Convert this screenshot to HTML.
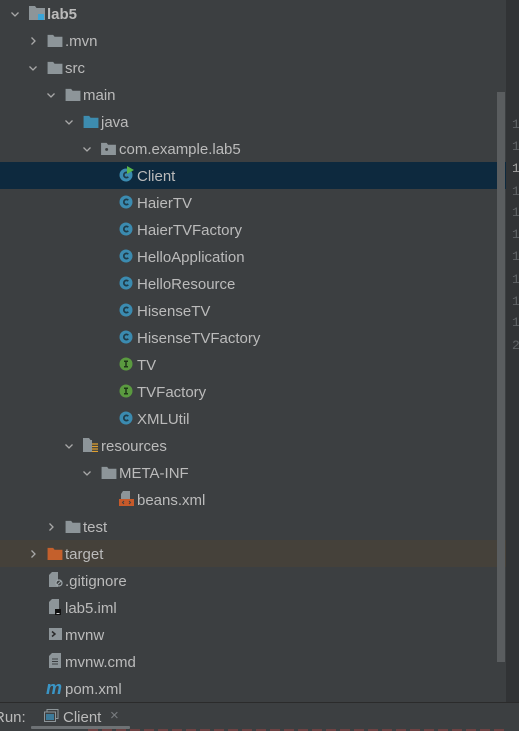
<!DOCTYPE html>
<html><head><meta charset="utf-8">
<style>
*{margin:0;padding:0;box-sizing:border-box}
html,body{width:519px;height:731px;overflow:hidden;background:#3c3f41;font-family:"Liberation Sans","DejaVu Sans",sans-serif}
.row{position:absolute;left:0;width:506px;height:27px}
.row .t{position:absolute;top:6px;font-size:15px;color:#bbbbbb;white-space:nowrap;line-height:17px}
.row svg{position:absolute}
.gut{position:absolute;left:506px;top:0;width:13px;height:703px;background:#313335}
.ln{position:absolute;left:512px;font-size:13px;color:#606366;font-family:"Liberation Mono",monospace}
</style></head><body>
<div class="gut"></div>
<div class="row" style="top:162px;background:#0d293e"></div>
<div class="row" style="top:540px;background:#45413a"></div>
<div style="position:absolute;left:497px;top:92px;width:8px;height:570px;background:#5a5d5f"></div>

<div class="ln" style="top:117px">1</div>
<div class="ln" style="top:139px">1</div>
<div class="ln" style="top:161px;color:#a4a3a3">1</div>
<div class="ln" style="top:184px">1</div>
<div class="ln" style="top:205px">1</div>
<div class="ln" style="top:227px">1</div>
<div class="ln" style="top:249px">1</div>
<div class="ln" style="top:272px">1</div>
<div class="ln" style="top:294px">1</div>
<div class="ln" style="top:315px">1</div>
<div class="ln" style="top:338px">2</div>

<svg width="0" height="0" style="position:absolute">
<defs>
<symbol id="dn" viewBox="0 0 10 10"><path d="M1.5 3.5L5 7 8.5 3.5" fill="none" stroke="#a8a8a8" stroke-width="1.3"/></symbol>
<symbol id="rt" viewBox="0 0 10 10"><path d="M3.5 1.5L7 5 3.5 8.5" fill="none" stroke="#a8a8a8" stroke-width="1.3"/></symbol>
<symbol id="fd" viewBox="0 0 16 14"><path d="M0 1h6l1.5 2H16v11H0z" fill="#8d9599"/></symbol>
<symbol id="cl" viewBox="0 0 14 14"><circle cx="7" cy="7" r="6.5" fill="#3b8bb0"/><path d="M9.3 5.2A2.6 2.6 0 1 0 9.3 8.8" fill="none" stroke="#1f3b48" stroke-width="1.7"/></symbol>
<symbol id="in" viewBox="0 0 14 14"><circle cx="7" cy="7" r="6.5" fill="#5a9a3f"/><path d="M5 4.2h4M5 9.8h4M7 4.2v5.6" stroke="#1e3518" stroke-width="1.5"/></symbol>
</defs></svg>

<div class="row" style="top:0"><svg style="left:10px;top:9px" width="10" height="10"><use href="#dn"/></svg>
<svg style="left:29px;top:6px" width="16" height="14" viewBox="0 0 16 14"><path d="M0 0h6l1.5 2H16v12H0z" fill="#8d9599"/><rect x="9" y="8" width="6" height="6" fill="#3aa5d8"/></svg>
<span class="t" style="left:47px;font-weight:bold">lab5</span></div>
<div class="row" style="top:27px"><svg style="left:28px;top:9px" width="10" height="10"><use href="#rt"/></svg>
<svg style="left:47px;top:7px" width="16" height="13"><use href="#fd"/></svg><span class="t" style="left:65px">.mvn</span></div>
<div class="row" style="top:54px"><svg style="left:28px;top:9px" width="10" height="10"><use href="#dn"/></svg>
<svg style="left:47px;top:7px" width="16" height="13"><use href="#fd"/></svg><span class="t" style="left:65px">src</span></div>
<div class="row" style="top:81px"><svg style="left:46px;top:9px" width="10" height="10"><use href="#dn"/></svg>
<svg style="left:65px;top:7px" width="16" height="13"><use href="#fd"/></svg><span class="t" style="left:83px">main</span></div>
<div class="row" style="top:108px"><svg style="left:64px;top:9px" width="10" height="10"><use href="#dn"/></svg>
<svg style="left:83px;top:7px" width="16" height="13" viewBox="0 0 16 14"><path d="M0 1h6l1.5 2H16v11H0z" fill="#3d8caf"/></svg><span class="t" style="left:101px">java</span></div>
<div class="row" style="top:135px"><svg style="left:82px;top:9px" width="10" height="10"><use href="#dn"/></svg>
<svg style="left:101px;top:7px" width="15" height="13" viewBox="0 0 16 14"><path d="M0 1h6l1.5 2H16v11H0z" fill="#8d9599"/><circle cx="6" cy="8" r="1.6" fill="#3c3f41"/></svg><span class="t" style="left:119px">com.example.lab5</span></div>
<div class="row" style="top:162px"><svg style="left:119px;top:6px" width="14" height="14"><use href="#cl"/></svg>
<svg style="left:127px;top:4px" width="7" height="8"><path d="M0 0L7 4 0 8z" fill="#5ab54a"/></svg>
<span class="t" style="left:137px">Client</span></div>
<div class="row" style="top:189px"><svg style="left:119px;top:6px" width="14" height="14"><use href="#cl"/></svg><span class="t" style="left:137px">HaierTV</span></div>
<div class="row" style="top:216px"><svg style="left:119px;top:6px" width="14" height="14"><use href="#cl"/></svg><span class="t" style="left:137px">HaierTVFactory</span></div>
<div class="row" style="top:243px"><svg style="left:119px;top:6px" width="14" height="14"><use href="#cl"/></svg><span class="t" style="left:137px">HelloApplication</span></div>
<div class="row" style="top:270px"><svg style="left:119px;top:6px" width="14" height="14"><use href="#cl"/></svg><span class="t" style="left:137px">HelloResource</span></div>
<div class="row" style="top:297px"><svg style="left:119px;top:6px" width="14" height="14"><use href="#cl"/></svg><span class="t" style="left:137px">HisenseTV</span></div>
<div class="row" style="top:324px"><svg style="left:119px;top:6px" width="14" height="14"><use href="#cl"/></svg><span class="t" style="left:137px">HisenseTVFactory</span></div>
<div class="row" style="top:351px"><svg style="left:119px;top:6px" width="14" height="14"><use href="#in"/></svg><span class="t" style="left:137px">TV</span></div>
<div class="row" style="top:378px"><svg style="left:119px;top:6px" width="14" height="14"><use href="#in"/></svg><span class="t" style="left:137px">TVFactory</span></div>
<div class="row" style="top:405px"><svg style="left:119px;top:6px" width="14" height="14"><use href="#cl"/></svg><span class="t" style="left:137px">XMLUtil</span></div>
<div class="row" style="top:432px"><svg style="left:64px;top:9px" width="10" height="10"><use href="#dn"/></svg>
<svg style="left:83px;top:5px" width="16" height="15" viewBox="0 0 16 15"><path d="M0 1h6l1.5 2H9v12H0z" fill="#8d9599"/><path d="M9 7h6M9 9.5h6M9 12h6M9 14.5h6" stroke="#e0a030" stroke-width="1.2"/></svg><span class="t" style="left:101px">resources</span></div>
<div class="row" style="top:459px"><svg style="left:82px;top:9px" width="10" height="10"><use href="#dn"/></svg>
<svg style="left:101px;top:7px" width="16" height="13"><use href="#fd"/></svg><span class="t" style="left:119px">META-INF</span></div>
<div class="row" style="top:486px"><svg style="left:119px;top:5px" width="15" height="16" viewBox="0 0 15 16"><path d="M4 0h7v9H2V3z" fill="#8d9599"/><rect x="0" y="8" width="15" height="7" fill="#c75a2a"/><path d="M5 10l-1.5 1.5L5 13M10 10l1.5 1.5L10 13" stroke="#3c3f41" fill="none" stroke-width="1"/></svg><span class="t" style="left:137px">beans.xml</span></div>
<div class="row" style="top:513px"><svg style="left:46px;top:9px" width="10" height="10"><use href="#rt"/></svg>
<svg style="left:65px;top:7px" width="16" height="13"><use href="#fd"/></svg><span class="t" style="left:83px">test</span></div>
<div class="row" style="top:540px"><svg style="left:28px;top:9px" width="10" height="10"><use href="#rt"/></svg>
<svg style="left:47px;top:7px" width="16" height="13" viewBox="0 0 16 14"><path d="M0 1h6l1.5 2H16v11H0z" fill="#c4602c"/></svg><span class="t" style="left:65px">target</span></div>
<div class="row" style="top:567px"><svg style="left:49px;top:5px" width="14" height="15" viewBox="0 0 14 15"><path d="M3 0h6v15H0V3z" fill="#8d9599"/><circle cx="10" cy="11" r="3" fill="#3c3f41" stroke="#a0a8ac" stroke-width="1.2"/><path d="M8 13l4-4" stroke="#a0a8ac" stroke-width="1"/></svg><span class="t" style="left:65px">.gitignore</span></div>
<div class="row" style="top:594px"><svg style="left:49px;top:5px" width="14" height="17" viewBox="0 0 14 17"><path d="M3 0h7v15H0V3z" fill="#8d9599"/><rect x="6" y="10" width="6" height="6" fill="#111"/><path d="M7.5 14.5h3" stroke="#ddd"/></svg><span class="t" style="left:65px">lab5.iml</span></div>
<div class="row" style="top:621px"><svg style="left:49px;top:7px" width="13" height="12" viewBox="0 0 13 12"><rect width="13" height="12" fill="#8d9599"/><path d="M3 3.5L6 6 3 8.5" stroke="#2b2b2b" stroke-width="1.5" fill="none"/></svg><span class="t" style="left:65px">mvnw</span></div>
<div class="row" style="top:648px"><svg style="left:49px;top:5px" width="12" height="15" viewBox="0 0 12 15"><path d="M3 0h9v15H0V3z" fill="#8d9599"/><path d="M3 6h6M3 8.5h6M3 11h6" stroke="#3c3f41" stroke-width="1"/></svg><span class="t" style="left:65px">mvnw.cmd</span></div>
<div class="row" style="top:675px"><span style="position:absolute;left:46px;top:3px;font-size:18px;font-style:italic;font-weight:bold;color:#3a95c5;font-family:'Liberation Sans',sans-serif">m</span><span class="t" style="left:65px">pom.xml</span></div>

<div style="position:absolute;left:0;top:702px;width:519px;height:1px;background:#2b2b2b"></div>
<div style="position:absolute;left:0;top:703px;width:519px;height:28px;background:#3c3f41"></div>
<span style="position:absolute;left:-6px;top:709px;font-size:15px;color:#bbbbbb">Run:</span>
<svg style="position:absolute;left:44px;top:709px" width="15" height="13" viewBox="0 0 15 13"><rect x="3" y="0.5" width="11" height="9" fill="none" stroke="#8d9599"/><rect x="0.5" y="3" width="11" height="9.5" fill="#3c3f41" stroke="#8d9599"/><rect x="2" y="5" width="8" height="6" fill="#3d7a99"/></svg>
<span style="position:absolute;left:63px;top:709px;font-size:15px;color:#bbbbbb">Client</span>
<span style="position:absolute;left:110px;top:707px;font-size:15px;color:#7a7d80">×</span>
<div style="position:absolute;left:31px;top:726px;width:99px;height:3px;background:#6e7275;border-radius:1px"></div>
<div style="position:absolute;left:88px;top:729px;width:420px;height:2px;background:repeating-linear-gradient(90deg,#a44 0 10px,#3c3f41 10px 14px);opacity:.45"></div>
</body></html>
